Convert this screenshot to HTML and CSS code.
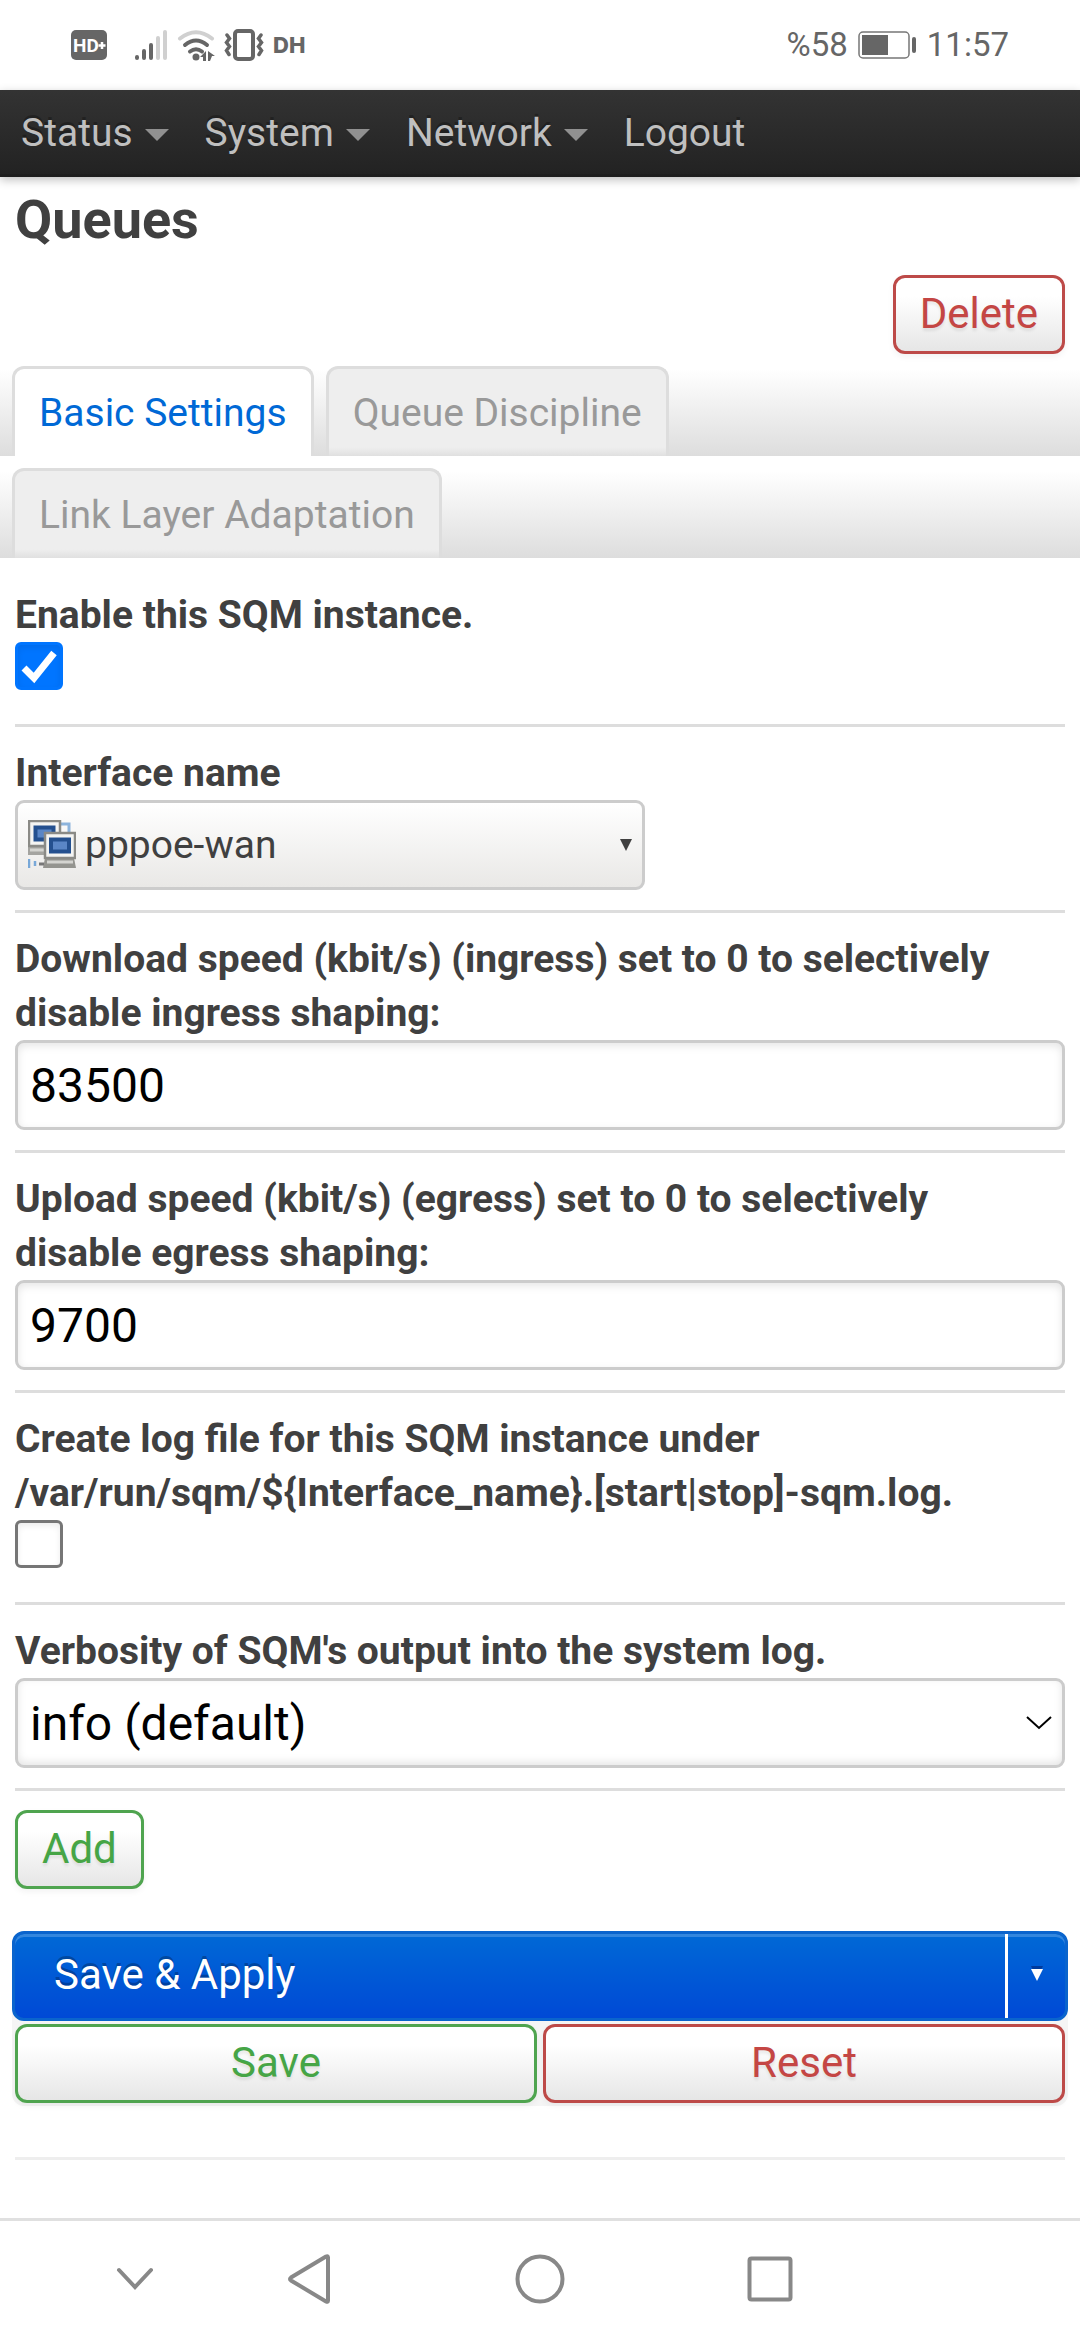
FILE: index.html
```html
<!DOCTYPE html>
<html lang="en">
<head>
<meta charset="utf-8">
<meta name="viewport" content="width=device-width">
<title>Queues</title>
<link rel="stylesheet" href="styles.css">
</head>
<body>
<div class="status-bar">
  <div class="status-icons">
    <svg class="hd" width="36" height="30" viewBox="0 0 36 30" aria-hidden="true">
      <rect width="36" height="30" rx="5" fill="#666"/>
      <text x="2" y="22" class="hd-text">HD</text>
      <path d="M31 12v7M27.500 15.500h7" stroke="#fff" stroke-width="2.500"/>
    </svg>
    <svg width="34" height="32" viewBox="0 0 34 32" stroke-width="4" stroke-linecap="round" aria-hidden="true">
      <path d="M3 28v1M10 22v7M17 16v13" stroke="#666"/>
      <path d="M24 9v20M31 3v26" stroke="#d0d0d0"/>
    </svg>
    <svg width="38" height="32" viewBox="0 0 38 32" fill="none" stroke="#666" stroke-width="4" stroke-linecap="round" aria-hidden="true">
      <path d="M3 9.500Q19-3 35 9.500" stroke="#d0d0d0"/>
      <path d="M8 16Q19 7 30 16M13 22.500Q19 18 25 22.500"/>
      <circle cx="19" cy="28" r="3.500" fill="#666" stroke="none"/>
      <path d="M29 22v10h-3v-4h-3zM31 22l7 5h-3l-2 5h-2z" fill="#666" stroke="none"/>
    </svg>
    <svg width="40" height="32" viewBox="0 0 40 32" fill="none" stroke="#666" stroke-width="4" stroke-linecap="round" aria-hidden="true">
      <rect x="11" y="2" width="18" height="28" rx="3"/>
      <path d="M3 6l2.500 3.500-3 4 3 4-3 4 2.500 4M37 6l-2.500 3.500 3 4-3 4 3 4-2.500 4" stroke-width="3.500"/>
    </svg>
    <span class="carrier">DH</span>
  </div>
  <div class="status-info">
    <span>%58</span>
    <svg width="59" height="28" viewBox="0 0 59 28" aria-hidden="true">
      <rect x="1" y="1" width="50" height="26" rx="4" fill="none" stroke="#777" stroke-width="1.500"/>
      <rect x="4" y="4" width="26" height="20" fill="#666"/>
      <rect x="54" y="6" width="4" height="16" rx="2" fill="#666"/>
    </svg>
    <span>11:57</span>
  </div>
</div>

<nav class="main-nav">
  <a href="#status">Status<span class="caret"></span></a>
  <a href="#system">System<span class="caret"></span></a>
  <a href="#network">Network<span class="caret"></span></a>
  <a href="#logout">Logout</a>
</nav>

<main>
  <header class="section-head">
    <h3>Queues</h3>
    <button class="btn btn-negative" type="button">Delete</button>
  </header>

  <nav class="tabs">
    <a class="tab tab-active" href="#basic">Basic Settings</a>
    <a class="tab" href="#discipline">Queue Discipline</a>
    <a class="tab" href="#adaptation">Link Layer Adaptation</a>
  </nav>

  <form class="settings">
    <div class="field field-check">
      <label for="enabled">Enable this SQM instance.</label>
      <input class="check" type="checkbox" id="enabled" checked>
    </div>
    <div class="field">
      <label for="interface">Interface name</label>
      <div class="iface">
        <svg class="iface-icon" width="48" height="48" viewBox="0 0 48 48" aria-hidden="true">
          <path d="M33 4h8v10" fill="none" stroke="#8db4dc" stroke-width="3"/>
          <path d="M0 27h18v8H0z" fill="#a4a4a0"/>
          <path d="M2 30h14" stroke="#d4d4d0" stroke-width="3"/>
          <rect x="1" y="1" width="31" height="25" fill="#f4f4f2" stroke="#8a8a86" stroke-width="2.500"/>
          <rect x="7.500" y="7.500" width="18" height="12" fill="#5a86c6" stroke="#24508f" stroke-width="4"/>
          <path d="M17 38h29l2 10H15z" fill="#94948f"/>
          <path d="M19 42h26" stroke="#d4d4d0" stroke-width="3"/>
          <rect x="17" y="13" width="30" height="25" fill="#f4f4f2" stroke="#8a8a86" stroke-width="2.500"/>
          <rect x="23" y="19.500" width="18" height="12" fill="#5a86c6" stroke="#24508f" stroke-width="4"/>
          <path d="M1 39v9M7 41v5" stroke="#78a8d8" stroke-width="2.500"/>
          <path d="M11 44h5" stroke="#777" stroke-width="3"/>
        </svg>
        <select class="iface-select" id="interface"><option>pppoe-wan</option></select>
        <svg class="iface-arrow" width="12" height="12" viewBox="0 0 12 12" aria-hidden="true"><path d="M0 0h12L6 12z" fill="#404040"/></svg>
      </div>
    </div>
    <div class="field">
      <label for="download">Download speed (kbit/s) (ingress) set to 0 to selectively disable ingress shaping:</label>
      <input class="control" type="text" id="download" value="83500">
    </div>
    <div class="field">
      <label for="upload">Upload speed (kbit/s) (egress) set to 0 to selectively disable egress shaping:</label>
      <input class="control" type="text" id="upload" value="9700">
    </div>
    <div class="field field-check">
      <label for="log">Create log file for this SQM instance under /var/run/sqm/${Interface_name}.[start|stop]-sqm.log.</label>
      <input class="check" type="checkbox" id="log">
    </div>
    <div class="field">
      <label for="verbosity">Verbosity of SQM's output into the system log.</label>
      <div class="verbosity">
        <select class="control control-select" id="verbosity"><option>info (default)</option></select>
        <svg class="chevron" width="26" height="14" viewBox="0 0 26 14" fill="none" stroke="#000" stroke-width="2" aria-hidden="true"><path d="M1 1l12 11L25 1"/></svg>
      </div>
    </div>
    <button class="btn btn-positive" type="button">Add</button>

    <div class="actions">
      <div class="apply">
        <button class="apply-main" type="button">Save &amp; Apply</button>
        <button class="apply-more" type="button" aria-label="More apply options">
          <svg width="12" height="16" viewBox="0 0 12 16" aria-hidden="true"><path d="M0 1h12L6 13z" fill="#003a9c"/><path d="M0 4h12L6 16z" fill="#fff"/></svg>
        </button>
      </div>
      <div class="pair">
        <button class="btn btn-positive" type="button">Save</button>
        <button class="btn btn-negative" type="button">Reset</button>
      </div>
    </div>
    <hr class="end-rule">
  </form>
</main>

<div class="system-nav">
  <button class="sys sys-hide" type="button" aria-label="Hide">
    <svg width="38" height="24" viewBox="0 0 38 24"><path d="M3 3l16 17L35 3"/></svg>
  </button>
  <button class="sys" type="button" aria-label="Back">
    <svg width="44" height="52" viewBox="0 0 44 52"><path d="M39 3.500L4 24.500q-2 1.500 0 3L39 48.500q2 1 2-1v-43q0-2-2-1z"/></svg>
  </button>
  <button class="sys" type="button" aria-label="Home">
    <svg width="52" height="52" viewBox="0 0 52 52"><circle cx="26" cy="26" r="22.500"/></svg>
  </button>
  <button class="sys" type="button" aria-label="Recent apps">
    <svg width="46" height="46" viewBox="0 0 46 46"><rect x="2.500" y="2.500" width="41" height="41" rx="2"/></svg>
  </button>
</div>
</body>
</html>
```

FILE: styles.css
```css
* {
  box-sizing: border-box;
}

body {
  margin: 0;
  min-height: 100vh;
  display: flex;
  flex-direction: column;
  background: #fff;
  color: #404040;
  font: 39px/54px Roboto, sans-serif;
}

button,
input,
select {
  margin: 0;
  font-family: inherit;
}

/* Phone status bar */
.status-bar {
  display: flex;
  justify-content: space-between;
  align-items: center;
  height: 90px;
  padding: 0 71px;
  color: #666;
}

.status-icons,
.status-info {
  display: flex;
  align-items: center;
}

.status-icons {
  gap: 9px;
}

.status-info {
  gap: 10px;
  font-size: 33px;
}

.hd {
  margin-right: 18px;
}

.hd-text {
  font: bold 19px Roboto, sans-serif;
  fill: #fff;
}

.carrier {
  font: 800 22px/32px Inter, sans-serif;
}

/* Main menu */
.main-nav {
  position: relative;
  display: flex;
  align-items: center;
  gap: 36px;
  height: 87px;
  padding: 0 21px 2px;
  background: linear-gradient(#333, #222);
  box-shadow: 0 3px 9px rgba(0, 0, 0, .25), inset 0 -3px 0 rgba(0, 0, 0, .1);
}

.main-nav a {
  display: flex;
  align-items: center;
  gap: 12px;
  color: #bfbfbf;
  text-decoration: none;
  text-shadow: 0 -3px 0 rgba(0, 0, 0, .25);
}

.caret {
  margin-top: 4px;
  border: 12px solid transparent;
  border-top-color: #909090;
  border-bottom: 0;
}

/* Section header */
.section-head {
  display: flex;
  flex-direction: column;
  align-items: flex-end;
  padding: 16px 15px 0;
}

h3 {
  align-self: stretch;
  margin: 0 0 28px;
  font-size: 54px;
  line-height: 54px;
}

.btn {
  height: 79px;
  padding: 0 24px 3px;
  border: 3px solid;
  border-radius: 12px;
  background: linear-gradient(#fff, #fff 25%, #e6e6e6);
  box-shadow: 0 3px 6px rgba(0, 0, 0, .05);
  font-size: 42px;
  text-shadow: 0 3px 3px rgba(0, 0, 0, .08);
}

.btn-negative {
  border-color: #bd4a48;
  color: #c44644;
}

.btn-positive {
  border-color: #4fa44f;
  color: #46a546;
}

/* Each wrapped row of tabs repeats the same 102px background band */
.tabs {
  display: flex;
  flex-wrap: wrap;
  column-gap: 12px;
  padding: 0 12px;
  background: linear-gradient(#fff 15%, #ddd) 0 0 / 100% 102px;
}

.tab {
  height: 90px;
  margin-top: 12px;
  padding: 0 24px;
  border: 3px solid #ddd;
  border-bottom: 0;
  border-radius: 12px 12px 0 0;
  background: linear-gradient(#eee 90%, #e0e0e0);
  color: #999;
  line-height: 88px;
  text-decoration: none;
}

.tab-active {
  background: #fff;
  color: #0069d6;
}

/* Settings form */
.settings {
  padding: 11px 15px 0;
}

.field {
  padding: 19px 0 20px;
  border-bottom: 3px solid #ddd;
}

.field-check {
  padding-bottom: 34px;
}

.field label {
  display: block;
  padding-right: 15px;
  font-weight: bold;
}

.check {
  display: block;
  width: 48px;
  height: 48px;
  appearance: none;
  border: 3px solid #767676;
  border-radius: 6px;
  background: #fff;
  box-shadow: inset 0 3px 6px rgba(0, 0, 0, .08);
}

.check:checked {
  border-color: #0075ff;
  background: #0075ff url("data:image/svg+xml,%3Csvg xmlns='http://www.w3.org/2000/svg' viewBox='0 0 42 42'%3E%3Cpath d='M6 23l10 10L36 8' fill='none' stroke='%23fff' stroke-width='7'/%3E%3C/svg%3E");
}

.control {
  display: block;
  width: 100%;
  height: 90px;
  padding: 0 12px;
  border: 3px solid #ccc;
  border-radius: 9px;
  background: #fff;
  box-shadow: inset 0 3px 9px rgba(0, 0, 0, .1);
  color: #000;
  font-size: 48px;
}

.control-select {
  appearance: none;
  box-shadow: inset 0 -3px 9px rgba(0, 0, 0, .1);
}

.iface,
.verbosity {
  position: relative;
}

.iface {
  width: 60%;
}

.iface-icon,
.iface-arrow,
.chevron {
  position: absolute;
  pointer-events: none;
}

.iface-icon {
  left: 13px;
  top: 20px;
}

.iface-arrow {
  right: 13px;
  top: 39px;
}

.chevron {
  right: 13px;
  top: 38px;
}

.iface-select {
  display: block;
  width: 100%;
  height: 90px;
  padding: 0 36px 0 67px;
  appearance: none;
  border: 3px solid #ccc;
  border-radius: 9px;
  background: linear-gradient(#fff, #e9e8e6);
  color: #404040;
  font-size: 39px;
}

.settings > .btn {
  display: block;
  margin-top: 19px;
}

/* Page actions */
.actions {
  margin: 42px -3px 0;
  padding-bottom: 3px;
  border-radius: 12px;
  background: #f5f5f5;
}

.apply {
  display: flex;
  height: 90px;
  border: 3px solid #0a64cd;
  border-radius: 12px;
  background: linear-gradient(#0069d6, #0049d6);
  box-shadow: inset 0 3px 0 rgba(255, 255, 255, .2);
}

.apply-main,
.apply-more {
  border: 0;
  background: none;
  color: #fff;
}

.apply-main {
  flex: 1;
  padding: 0 39px 3px;
  font-size: 42px;
  text-align: left;
  text-shadow: 0 -3px 0 rgba(0, 0, 0, .25);
}

.apply-more {
  display: flex;
  align-items: center;
  justify-content: center;
  width: 60px;
  padding: 0 0 6px;
  border-left: 3px solid #fff;
}

.pair {
  display: grid;
  grid-template-columns: 1fr 1fr;
  gap: 6px;
  padding: 3px 3px 0;
}

.end-rule {
  height: 3px;
  margin: 51px 0 57px;
  border: 0;
  background: #eee;
}

/* Phone navigation bar */
.system-nav {
  display: grid;
  grid-template-columns: 194fr 229fr 234fr 225fr 198fr;
  height: 122px;
  margin-top: auto;
  padding-bottom: 3px;
  border-top: 3px solid #e0e0e0;
}

.sys {
  display: flex;
  align-items: center;
  justify-content: center;
  padding: 0;
  border: 0;
  background: none;
}

.sys-hide {
  padding-left: 76px;
}

.sys svg {
  fill: none;
  stroke: #888;
  stroke-width: 4;
  stroke-linecap: round;
}
```
